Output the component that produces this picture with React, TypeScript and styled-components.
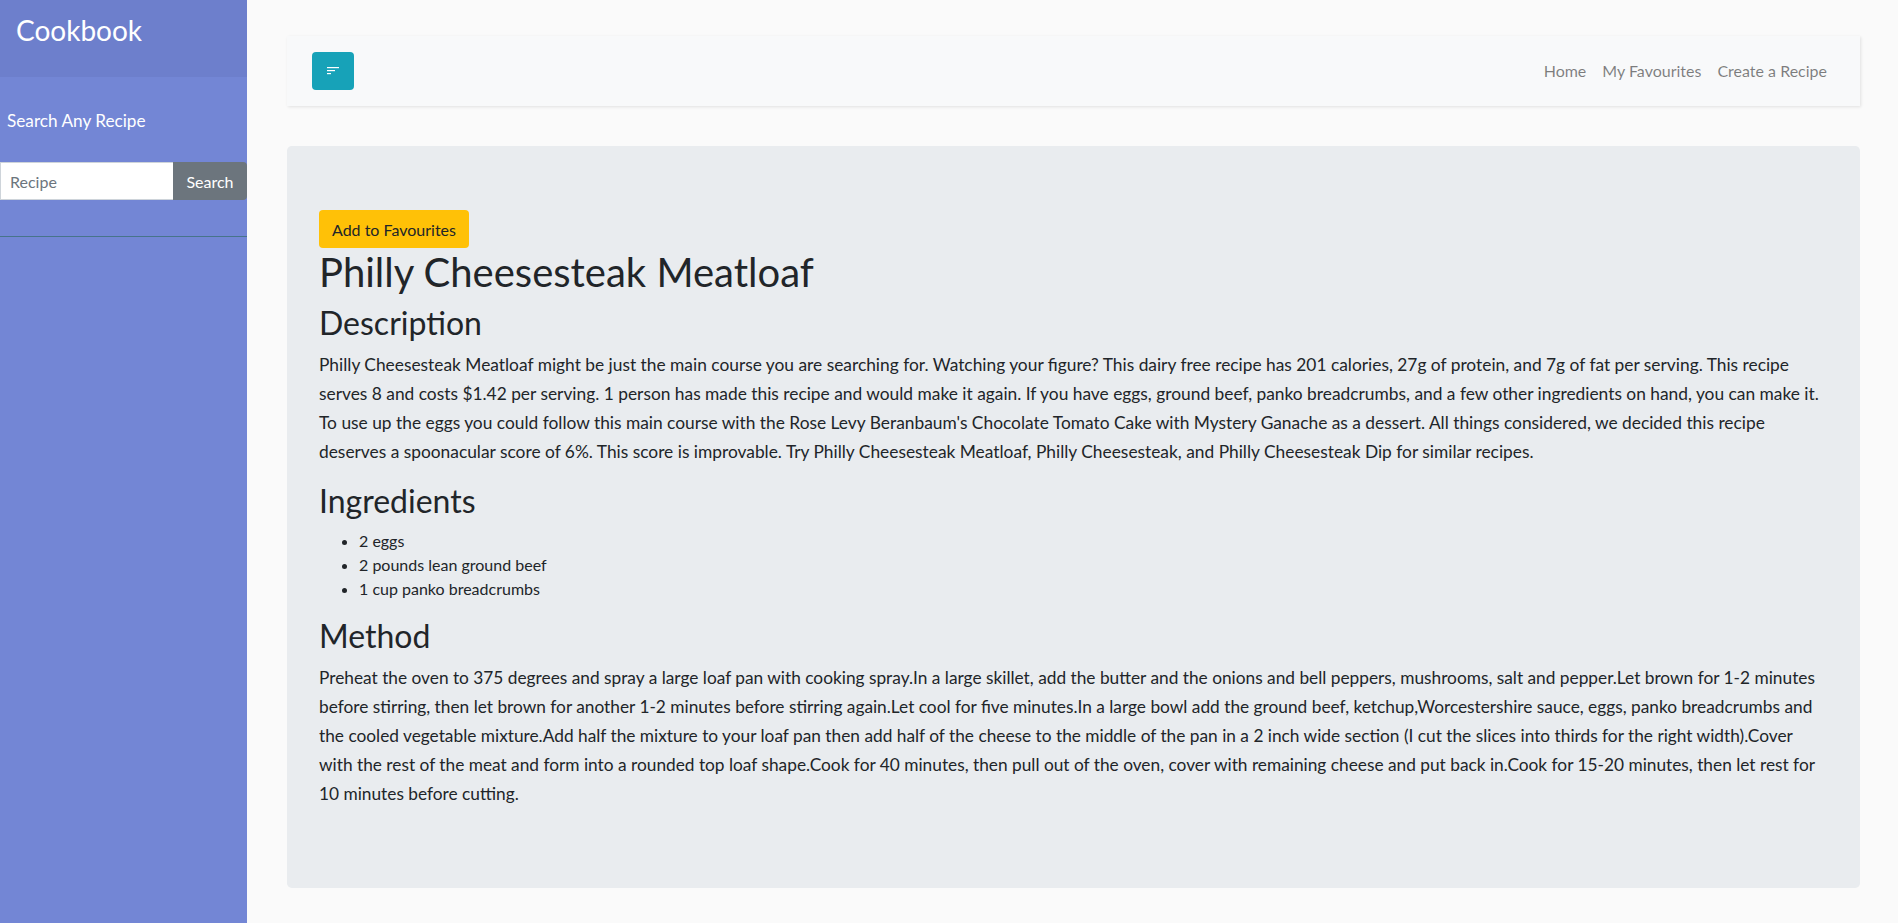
import React from "react";
import styled, { createGlobalStyle } from "styled-components";

const GlobalStyle = createGlobalStyle`
  * { box-sizing: border-box; }
  html, body { margin: 0; padding: 0; }
  body {
    font-family: Lato, "Noto Sans", sans-serif;
    background: #fafafa;
    color: #212529;
    font-size: 16px;
    line-height: 1.5;
  }
`;

const Wrapper = styled.div`
  display: flex;
  align-items: stretch;
  min-height: 923px;
`;

const Sidebar = styled.nav`
  width: 247px;
  flex-shrink: 0;
  background: #7386d5;
  color: #fff;
`;

const SidebarHeader = styled.div`
  height: 77px;
  padding: 14px 16px;
  background: #6d7fcc;
`;

const Brand = styled.h3`
  margin: 0;
  font-size: 28px;
  font-weight: 400;
  line-height: 1.2;
  color: #fff;
`;

const Components = styled.div`
  padding: 30px 0 0;
  border-bottom: 1px solid #47748b;
  height: 160px;
`;

const SearchTitle = styled.p`
  margin: 0 0 28px;
  padding: 0 7px;
  font-size: 17.2px;
  line-height: 27px;
  color: #fff;
`;

const SearchRow = styled.form`
  display: flex;
  height: 38px;
`;

const SearchInput = styled.input`
  width: 173px;
  height: 38px;
  border: 1px solid #ced4da;
  border-right: none;
  border-radius: 0;
  padding: 6px 9px;
  font-family: Lato, sans-serif;
  font-size: 16px;
  color: #495057;
  background: #fff;
  outline: none;
  &::placeholder { color: #6c757d; }
`;

const SearchButton = styled.button`
  flex: 1;
  height: 38px;
  border: none;
  border-radius: 0 4px 4px 0;
  background: #6c757d;
  color: #fff;
  font-family: Lato, sans-serif;
  font-size: 16px;
  padding: 0 12px;
`;

const Content = styled.main`
  flex: 1;
  padding: 36px 38px 36px 40px;
  min-width: 0;
`;

const Navbar = styled.header`
  display: flex;
  align-items: center;
  justify-content: space-between;
  height: 70px;
  padding: 0 25px;
  background: #f8f9fa;
  box-shadow: 1px 1px 3px rgba(0, 0, 0, 0.1);
  margin-bottom: 40px;
`;

const ToggleButton = styled.button`
  width: 42px;
  height: 38px;
  border: none;
  border-radius: 4px;
  background: #17a2b8;
  display: flex;
  align-items: center;
  justify-content: center;
  padding: 0;
`;

const NavLinks = styled.ul`
  display: flex;
  list-style: none;
  margin: 0;
  padding: 0;
`;

const NavLink = styled.a`
  display: block;
  padding: 8px;
  font-size: 16px;
  line-height: 24px;
  color: rgba(0, 0, 0, 0.5);
  text-decoration: none;
`;

const Jumbotron = styled.section`
  background: #e9ecef;
  border-radius: 4.8px;
  padding: 64px 32px;
`;

const FavButton = styled.button`
  display: block;
  height: 38px;
  padding: 0 13px;
  border: none;
  border-radius: 4px;
  background: #ffc107;
  color: #212529;
  font-family: Lato, sans-serif;
  font-size: 16px;
`;

const Title = styled.h1`
  margin: 0 0 8px;
  font-size: 40px;
  font-weight: 400;
  line-height: 1.2;
`;

const SectionHeading = styled.h2`
  margin: 0 0 8px;
  font-size: 32px;
  font-weight: 400;
  line-height: 1.2;
`;

const Paragraph = styled.p<{ $size: number }>`
  margin: 0 0 16px;
  font-size: ${(p) => p.$size}px;
  line-height: 29px;
  color: #212529;
`;

const List = styled.ul`
  margin: 0 0 16px;
  padding-left: 40px;
  font-size: 16px;
  line-height: 24px;
`;

const MenuIcon = () => (
  <svg width="12" height="8" viewBox="0 0 12 8" fill="none">
    <rect x="0" y="0" width="12" height="1.2" fill="#fff" />
    <rect x="0" y="3" width="8" height="1.2" fill="#fff" />
    <rect x="0" y="6" width="4" height="1.2" fill="#fff" />
  </svg>
);

const ingredients = ["2 eggs", "2 pounds lean ground beef", "1 cup panko breadcrumbs"];

export default function App() {
  return (
    <>
      <GlobalStyle />
      <Wrapper>
        <Sidebar>
          <SidebarHeader>
            <Brand>Cookbook</Brand>
          </SidebarHeader>
          <Components>
            <SearchTitle>Search Any Recipe</SearchTitle>
            <SearchRow onSubmit={(e) => e.preventDefault()}>
              <SearchInput placeholder="Recipe" />
              <SearchButton type="submit">Search</SearchButton>
            </SearchRow>
          </Components>
        </Sidebar>
        <Content>
          <Navbar>
            <ToggleButton aria-label="Toggle sidebar">
              <MenuIcon />
            </ToggleButton>
            <NavLinks>
              <li><NavLink href="#">Home</NavLink></li>
              <li><NavLink href="#">My Favourites</NavLink></li>
              <li><NavLink href="#">Create a Recipe</NavLink></li>
            </NavLinks>
          </Navbar>
          <Jumbotron>
            <FavButton>Add to Favourites</FavButton>
            <Title>Philly Cheesesteak Meatloaf</Title>
            <SectionHeading>Description</SectionHeading>
            <Paragraph $size={17.35}>
              Philly Cheesesteak Meatloaf might be just the main course you are searching for. Watching your figure? This dairy free recipe has 201 calories, 27g of protein, and 7g of fat per serving. This recipe serves 8 and costs $1.42 per serving. 1 person has made this recipe and would make it again. If you have eggs, ground beef, panko breadcrumbs, and a few other ingredients on hand, you can make it. To use up the eggs you could follow this main course with the Rose Levy Beranbaum's Chocolate Tomato Cake with Mystery Ganache as a dessert. All things considered, we decided this recipe deserves a spoonacular score of 6%. This score is improvable. Try Philly Cheesesteak Meatloaf, Philly Cheesesteak, and Philly Cheesesteak Dip for similar recipes.
            </Paragraph>
            <SectionHeading>Ingredients</SectionHeading>
            <List>
              {ingredients.map((i) => (
                <li key={i}>{i}</li>
              ))}
            </List>
            <SectionHeading>Method</SectionHeading>
            <Paragraph $size={17.3}>
              Preheat the oven to 375 degrees and spray a large loaf pan with cooking spray.In a large skillet, add the butter and the onions and bell peppers, mushrooms, salt and pepper.Let brown for 1-2 minutes before stirring, then let brown for another 1-2 minutes before stirring again.Let cool for five minutes.In a large bowl add the ground beef, ketchup,Worcestershire sauce, eggs, panko breadcrumbs and the cooled vegetable mixture.Add half the mixture to your loaf pan then add half of the cheese to the middle of the pan in a 2 inch wide section (I cut the slices into thirds for the right width).Cover with the rest of the meat and form into a rounded top loaf shape.Cook for 40 minutes, then pull out of the oven, cover with remaining cheese and put back in.Cook for 15-20 minutes, then let rest for 10 minutes before cutting.
            </Paragraph>
          </Jumbotron>
        </Content>
      </Wrapper>
    </>
  );
}
